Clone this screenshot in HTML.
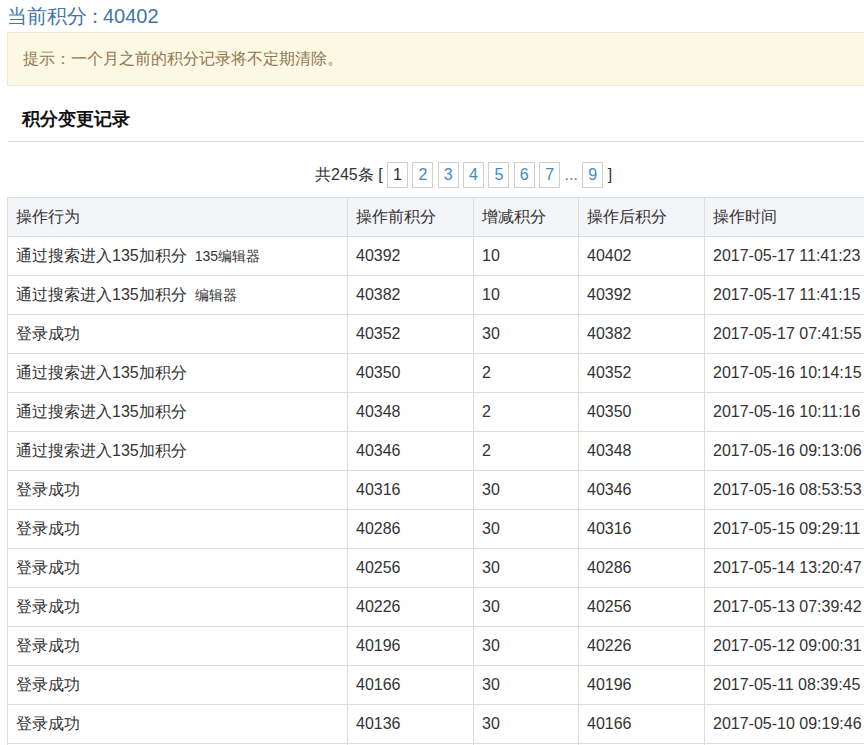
<!DOCTYPE html>
<html><head><meta charset="utf-8">
<style>
html,body{margin:0;padding:0;background:#fff;}
body{font-family:"Liberation Sans",sans-serif;font-size:14px;color:#333;width:864px;height:745px;overflow:hidden;position:relative;}
.title{position:absolute;left:7px;top:4px;font-size:20px;color:#3f77a8;line-height:24px;white-space:nowrap;}
.alert{position:absolute;left:7px;top:32px;width:900px;height:54px;background:#fcf8e3;border:1px solid #f3ead0;box-sizing:border-box;}
.alert span{position:absolute;left:15px;top:16px;color:#917750;font-size:16px;line-height:20px;white-space:nowrap;}
.h{position:absolute;left:22px;top:107px;font-size:18px;font-weight:bold;color:#111;line-height:24px;white-space:nowrap;}
.hr{position:absolute;left:8px;top:141px;width:900px;height:1px;background:#ddd;}
.pager{position:absolute;left:315px;top:162px;height:26px;line-height:26px;font-size:16px;color:#333;white-space:nowrap;}
.pg{display:inline-block;border:1px solid #d0d0d0;height:24px;line-height:24px;padding:0 5px;color:#428bca;vertical-align:top;}
table{position:absolute;left:7px;top:197px;border-collapse:collapse;width:900px;table-layout:fixed;}
td,th{border:1px solid #ddd;height:38px;padding:0 8px;font-size:16px;color:#333;text-align:left;font-weight:normal;white-space:nowrap;}
th{background:#f4f5f9;}
small{font-size:14px;margin-left:3.5px;}
</style></head><body>
<div class="title">当前积分<span style="margin-left:-2px;letter-spacing:-2px">：</span>40402</div>
<div class="alert"><span>提示：一个月之前的积分记录将不定期清除。</span></div>
<div class="h">积分变更记录</div>
<div class="hr"></div>
<div class="pager">共245条 [ <span class="pg" style="color:#333">1</span> <span class="pg">2</span> <span class="pg">3</span> <span class="pg">4</span> <span class="pg">5</span> <span class="pg">6</span> <span class="pg">7</span> <span style="color:#777">...</span> <span class="pg">9</span> ]</div>
<table>
<colgroup><col style="width:340px"><col style="width:126px"><col style="width:105px"><col style="width:126px"><col style="width:203px"></colgroup>
<tr><th>操作行为</th><th>操作前积分</th><th>增减积分</th><th>操作后积分</th><th>操作时间</th></tr>
<tr><td>通过搜索进入135加积分 <small>135编辑器</small></td><td>40392</td><td>10</td><td>40402</td><td>2017-05-17 11:41:23</td></tr>
<tr><td>通过搜索进入135加积分 <small>编辑器</small></td><td>40382</td><td>10</td><td>40392</td><td>2017-05-17 11:41:15</td></tr>
<tr><td>登录成功</td><td>40352</td><td>30</td><td>40382</td><td>2017-05-17 07:41:55</td></tr>
<tr><td>通过搜索进入135加积分</td><td>40350</td><td>2</td><td>40352</td><td>2017-05-16 10:14:15</td></tr>
<tr><td>通过搜索进入135加积分</td><td>40348</td><td>2</td><td>40350</td><td>2017-05-16 10:11:16</td></tr>
<tr><td>通过搜索进入135加积分</td><td>40346</td><td>2</td><td>40348</td><td>2017-05-16 09:13:06</td></tr>
<tr><td>登录成功</td><td>40316</td><td>30</td><td>40346</td><td>2017-05-16 08:53:53</td></tr>
<tr><td>登录成功</td><td>40286</td><td>30</td><td>40316</td><td>2017-05-15 09:29:11</td></tr>
<tr><td>登录成功</td><td>40256</td><td>30</td><td>40286</td><td>2017-05-14 13:20:47</td></tr>
<tr><td>登录成功</td><td>40226</td><td>30</td><td>40256</td><td>2017-05-13 07:39:42</td></tr>
<tr><td>登录成功</td><td>40196</td><td>30</td><td>40226</td><td>2017-05-12 09:00:31</td></tr>
<tr><td>登录成功</td><td>40166</td><td>30</td><td>40196</td><td>2017-05-11 08:39:45</td></tr>
<tr><td>登录成功</td><td>40136</td><td>30</td><td>40166</td><td>2017-05-10 09:19:46</td></tr>
<tr><td>登录成功</td><td>40106</td><td>30</td><td>40136</td><td>2017-05-09 09:19:46</td></tr>
</table>
</body></html>
